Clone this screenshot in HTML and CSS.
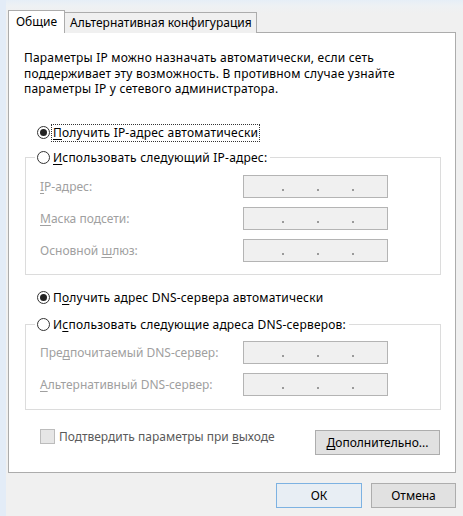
FILE: index.html
```html
<!DOCTYPE html>
<html lang="ru">
<head>
<meta charset="utf-8">
<link rel="stylesheet" href="styles.css">
</head>
<body>
<div class="window">
  <div class="tabs">
    <div class="tab active">Общие</div>
    <div class="tab">Альтернативная конфигурация</div>
  </div>
  <div class="panel">
    <p class="desc">Параметры IP можно назначать автоматически, если сеть<br>поддерживает эту возможность. В противном случае узнайте<br>параметры IP у сетевого администратора.</p>

    <div class="option first"><span class="radio checked"></span><span class="text focus"><u>П</u>олучить IP-адрес автоматически</span></div>

    <fieldset class="group g1">
      <legend class="option"><span class="radio"></span><span class="text"><u>И</u>спользовать следующий IP-адрес:</span></legend>
      <div class="field"><span class="lbl"><u>I</u>P-адрес:</span><span class="ip"><i></i><i></i><i></i></span></div>
      <div class="field"><span class="lbl"><u>М</u>аска подсети:</span><span class="ip"><i></i><i></i><i></i></span></div>
      <div class="field"><span class="lbl">Основной <u>ш</u>люз:</span><span class="ip"><i></i><i></i><i></i></span></div>
    </fieldset>

    <div class="option third"><span class="radio checked"></span><span class="text">П<u>о</u>лучить адрес DNS-сервера автоматически</span></div>

    <fieldset class="group g2">
      <legend class="option"><span class="radio"></span><span class="text">И<u>с</u>пользовать следующие адреса DNS-серверов:</span></legend>
      <div class="field"><span class="lbl">Пре<u>д</u>почитаемый DNS-сервер:</span><span class="ip"><i></i><i></i><i></i></span></div>
      <div class="field"><span class="lbl"><u>А</u>льтернативный DNS-сервер:</span><span class="ip"><i></i><i></i><i></i></span></div>
    </fieldset>

    <div class="bottom-row">
      <div class="check"><span class="box"></span><span class="check-text">Подтвердить параметры при <u>в</u>ыходе</span></div>
      <button class="btn adv"><u>Д</u>ополнительно...</button>
    </div>
  </div>
  <div class="footer">
    <button class="btn ok">ОК</button>
    <button class="btn cancel">Отмена</button>
  </div>
</div>
</body>
</html>
```

FILE: styles.css
```css
* { box-sizing: border-box; }

html, body {
  margin: 0;
  padding: 0;
}

body {
  width: 463px;
  height: 516px;
  overflow: hidden;
  font-family: "Noto Sans", "Open Sans", sans-serif;
  font-size: 12px;
  color: #000;
  background:
    linear-gradient(to right, #e3ecf7 0, #e3ecf7 6px, transparent 6px),
    linear-gradient(to bottom, #e6eef7 0, #eef1f4 6px, #f0f0f0 14px);
  background-color: #f0f0f0;
}

.window {
  padding: 10px 7px 0 8px;
}

u { text-decoration: underline; text-underline-offset: 2px; }

/* Tabs */
.tabs {
  display: flex;
  align-items: flex-end;
  margin-bottom: -1px;
  position: relative;
  z-index: 1;
}

.tab {
  height: 21px;
  line-height: 19px;
  padding: 0 4px 0 5px;
  border: 1px solid #acacac;
  border-bottom: none;
  background: #f0f0f0;
  white-space: nowrap;
}

.tab.active {
  height: 23px;
  width: 57px;
  line-height: 21px;
  text-align: center;
  background: #fff;
  border-color: #acacac;
  margin-right: -1px;
  position: relative;
  z-index: 2;
  padding: 0;
}

/* Panel */
.panel {
  width: 448px;
  height: 441px;
  background: #fff;
  border: 1px solid #acacac;
  padding: 17px 14px 0 0;
  display: flex;
  flex-direction: column;
}

.desc {
  margin: 0 0 0 15px;
  line-height: 15.5px;
  letter-spacing: 0.2px;
}

.option {
  display: flex;
  align-items: center;
  height: 16px;
  white-space: nowrap;
}

.option.first {
  margin: 28px 0 0 28px;
}

.option.third {
  margin: 15px 0 0 28px;
}

.radio {
  width: 13px;
  height: 13px;
  border: 1px solid #333;
  border-radius: 50%;
  background: #fff;
  display: flex;
  align-items: center;
  justify-content: center;
  flex: none;
}

.radio.checked::after {
  content: "";
  width: 7px;
  height: 7px;
  border-radius: 50%;
  background: #222;
}

.text {
  margin-left: 3px;
  line-height: 16px;
  letter-spacing: 0.2px;
}

.text.focus {
  outline: 1px dotted #333;
  outline-offset: 0;
  padding: 0 1px;
  margin-left: 2px;
}

/* Group boxes */
.group {
  margin: 9px 0 0 16px;
  padding: 9px 0 12px 14px;
  border: 1px solid #dcdcdc;
  min-width: 0;
}

.group.g2 {
  margin-top: 11px;
  padding-top: 8px;
  padding-bottom: 13px;
}

.group legend {
  padding: 0 3px 0 2px;
  margin-left: -5px;
}

.field {
  display: flex;
  align-items: center;
  height: 23px;
  margin-bottom: 9px;
}

.field:last-child { margin-bottom: 0; }

.lbl {
  width: 203px;
  color: #a0a0a0;
  white-space: nowrap;
}

.ip {
  width: 145px;
  height: 23px;
  border: 1px solid #b4b4b4;
  background: #f0f0f0;
  display: flex;
  gap: 33px;
  padding: 13px 0 0 38px;
}

.ip i {
  display: block;
  width: 2px;
  height: 2px;
  background: #9a9a9a;
}

/* Bottom row */
.bottom-row {
  display: flex;
  justify-content: space-between;
  align-items: flex-start;
  margin: 19px 0 0 31px;
}

.check {
  display: flex;
  align-items: center;
  gap: 4px;
  height: 15px;
  color: #5a5a5a;
}

.box {
  width: 15px;
  height: 15px;
  background: #e6e6e6;
  border: 1px solid #bcbcbc;
}

.btn {
  font: inherit;
  color: #000;
  background: #e1e1e1;
  border: 1px solid #adadad;
  height: 25px;
  padding: 0;
  margin: 0;
}

.btn.adv {
  width: 125px;
  margin-top: 1px;
  margin-right: 1px;
}

/* Footer */
.footer {
  display: flex;
  justify-content: flex-end;
  gap: 9px;
  margin-top: 10px;
}

.btn.ok {
  width: 86px;
  background: #e8eef4;
  border-color: #7db2e2;
}

.btn.cancel {
  width: 85px;
}
```
